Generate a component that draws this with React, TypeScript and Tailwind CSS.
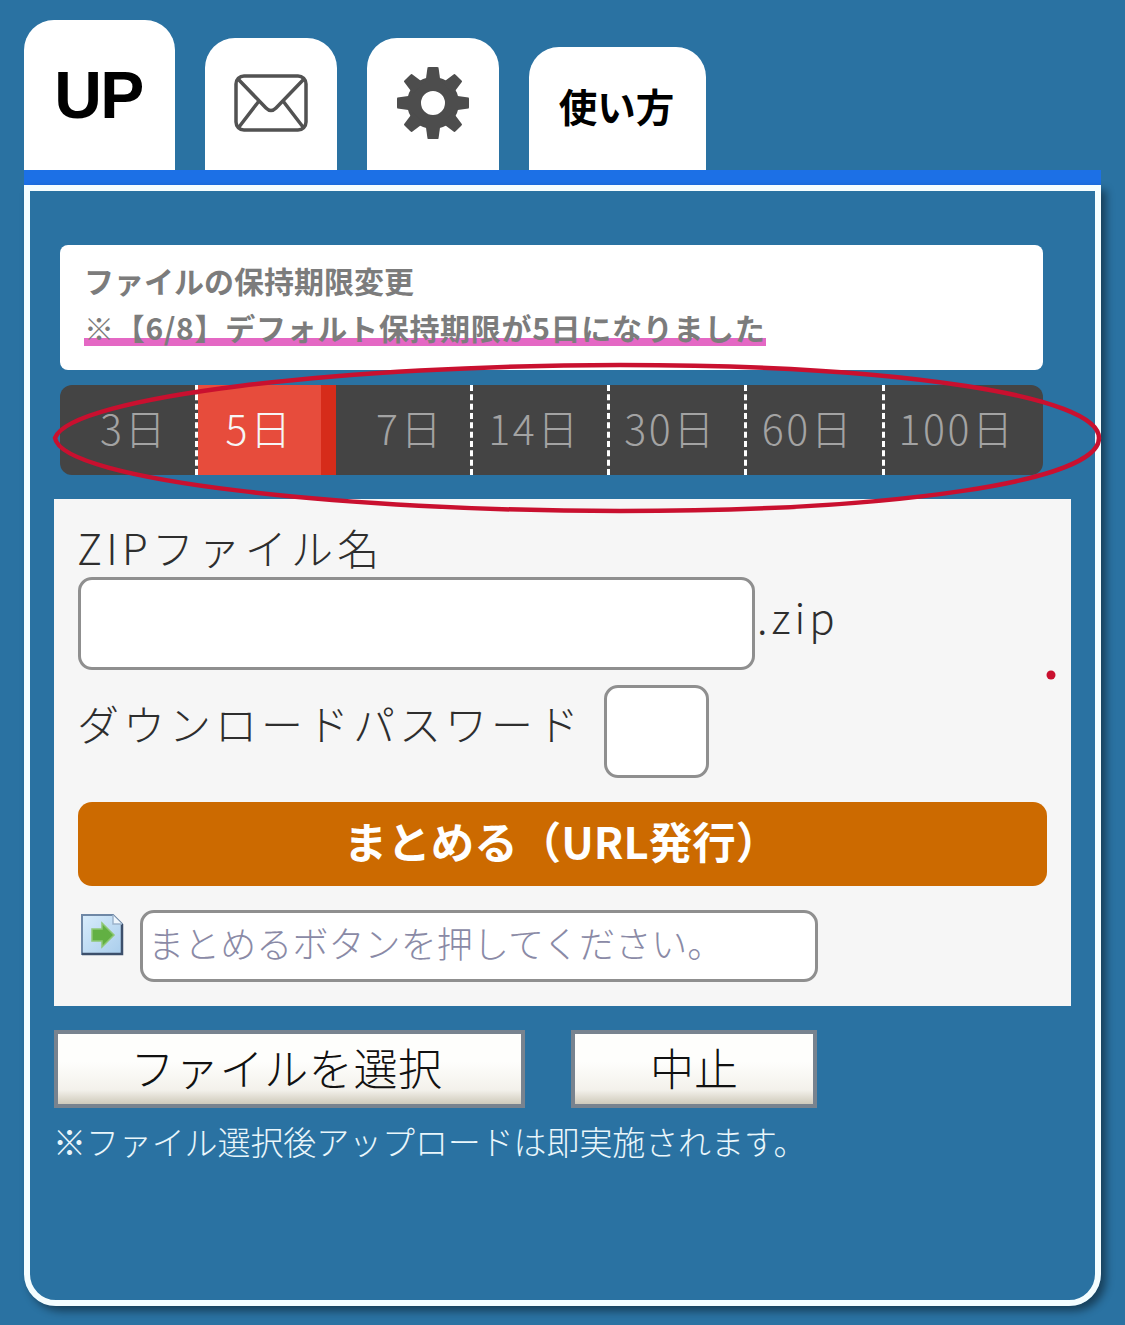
const jp = "font-['Noto_Sans_CJK_JP','Noto_Sans',sans-serif]";

const tabClass = "bg-white rounded-t-[30px] flex items-center justify-center";

const MailIcon = () => (
  <svg width="74" height="58" viewBox="0 0 74 58" fill="none" stroke="#525252" strokeWidth="3.5" strokeLinejoin="round">
    <rect x="2" y="2" width="70" height="54" rx="8" />
    <path d="M4 5 L32 34 Q37 39 42 34 L70 5" />
    <path d="M25 27 L5 53 M49 27 L69 53" />
  </svg>
);

const GearIcon = () => (
  <svg width="74" height="74" viewBox="0 0 74 74" fill="#4d4d4d">
    <path
      fillRule="evenodd"
      d="M37 11a26 26 0 1 0 0 52a26 26 0 1 0 0-52ZM37 25a12 12 0 1 1 0 24a12 12 0 1 1 0-24Z"
    />
    {[0, 45, 90, 135, 180, 225, 270, 315].map((r) => (
      <path
        key={r}
        d="M31.500 1.500Q31.600 1 33 1H41Q42.400 1 42.500 1.500L44.500 16H29.500Z"
        transform={`rotate(${r} 37 37)`}
      />
    ))}
  </svg>
);

const NextIcon = () => (
  <svg width="46" height="46" viewBox="0 0 46 46">
    <defs>
      <linearGradient id="sheet" x1="0" y1="0" x2="1" y2="1">
        <stop offset="0" stopColor="#d8ecfb" />
        <stop offset="1" stopColor="#a9cdec" />
      </linearGradient>
    </defs>
    <path d="M3 3H34L43 12V42H3Z" fill="url(#sheet)" stroke="#6f88a6" strokeWidth="2" />
    <path d="M3 42H43V12" fill="none" stroke="#3c4f6b" strokeWidth="2.500" />
    <path d="M34 3V12H43" fill="#eef6fc" stroke="#9db4cb" strokeWidth="1.500" />
    <path d="M13 17H23V11L35 23L23 35V29H13Z" fill="#62b043" stroke="#8fc876" strokeWidth="1.500" />
  </svg>
);

const days = [
  { label: "3日", w: "w-[138px]", dash: true, text: "pl-[13px]" },
  { label: "5日", w: "w-[138px]", active: true },
  { label: "7日", w: "w-[137px]", dash: true, text: "pl-[14px]" },
  { label: "14日", w: "w-[137px]", dash: true, text: "pr-[11px]" },
  { label: "30日", w: "w-[137px]", dash: true, text: "pr-[13px]" },
  { label: "60日", w: "w-[138px]", dash: true, text: "pr-[13px]" },
  { label: "100日", w: "flex-1", text: "pr-[14px]" },
];

const App = () => {
  return (
    <div className={`relative w-[1125px] h-[1325px] overflow-hidden bg-[#2a72a2] pt-[20px] pl-[24px] ${jp}`}>
      {/* tabs */}
      <div className="flex items-end h-[150px]">
        <div className={`${tabClass} w-[151px] h-[150px] pr-[2px]`}>
          <span className="text-[66px] font-bold text-black leading-none font-['Liberation_Sans',sans-serif] tracking-[-1.5px]">UP</span>
        </div>
        <div className={`${tabClass} w-[132px] h-[132px] ml-[30px] pb-[2px]`}>
          <MailIcon />
        </div>
        <div className={`${tabClass} w-[132px] h-[132px] ml-[30px] pb-[2px]`}>
          <GearIcon />
        </div>
        <div className={`${tabClass} w-[177px] h-[123px] ml-[30px] pr-[2px]`}>
          <span className="text-[38.500px] font-bold text-black leading-none mb-[7px]">使い方</span>
        </div>
      </div>

      {/* main panel */}
      <div className="w-[1077px] h-[1136px] border-t-[15px] border-t-[#1c70e6]">
        <div className="h-[1121px] border-[6px] border-[#f4fdff] rounded-b-[32px] shadow-[5px_5px_8px_rgba(0,0,0,0.45)] px-[24px] pt-[54px]">
          <div className="ml-[6px] w-[983px] h-[125px] bg-white rounded-[8px] px-[24px] pt-[11px] text-[30px] font-bold text-[#7c7c7c] leading-[48px]">
            <p>ファイルの保持期限変更</p>
            <p className="w-fit mt-[5px] pb-[1px] leading-[36px] tracking-[0.7px] bg-[linear-gradient(transparent_78%,#e468c4_78%)]">※【6/8】デフォルト保持期限が5日になりました</p>
          </div>

          <div className="ml-[6px] w-[983px] mt-[15px] h-[90px] bg-[#444444] rounded-[12px] flex overflow-hidden text-[41px] font-light text-[#a3a3a3] tracking-[2.5px]">
            {days.map((d) => (
              <div
                key={d.label}
                className={`${d.w} pb-[4px] flex items-center justify-center ${d.text ?? ""} ${
                  d.active ? "bg-[#e74c3c] border-r-[15px] border-[#d62c1a] text-[#f6f6f6]" : ""
                } ${d.dash ? "border-r-[3px] border-dashed border-white" : ""}`}
              >
                {d.label}
              </div>
            ))}
          </div>

          {/* form */}
          <div className="mt-[24px] h-[507px] bg-[#f6f6f6] px-[24px] pt-[24px] text-[#2e2e2e] text-[42px] font-light">
            <p className="leading-[54px] -mt-[3px] mb-[3px] -ml-[1px] tracking-[4.300px]">ZIPファイル名</p>
            <div className="flex items-center">
              <div className="w-[677px] h-[93px] bg-white border-[3px] border-[#8f8f8f] rounded-[14px]"></div>
              <span className="ml-[2px] tracking-[4px] mb-[16px]">.zip</span>
            </div>
            <div className="flex items-center mt-[15px]">
              <span className="tracking-[4px] -ml-[1px] w-[527px] mb-[18px]">ダウンロードパスワード</span>
              <div className="w-[105px] h-[93px] bg-white border-[3px] border-[#8f8f8f] rounded-[14px]"></div>
            </div>
            <button className="block mt-[24px] pb-[6px] pr-[2px] w-[969px] h-[84px] bg-[#cc6a00] rounded-[14px] text-white text-[43.500px] font-bold">
              まとめる（URL発行）
            </button>
            <div className="flex items-start mt-[24px]">
              <div className="ml-[1px] mt-[2px] w-[61px]">
                <NextIcon />
              </div>
              <div className="w-[678px] h-[72px] bg-white border-[3px] border-[#8f8f8f] rounded-[14px] pl-[5px] text-[36px] leading-[59px] text-[#8a8aa6] tracking-[0.1px]">
                まとめるボタンを押してください。
              </div>
            </div>
          </div>

          {/* file buttons */}
          <div className="flex mt-[24px] text-[44px] text-[#111] font-light">
            <button className="w-[471px] h-[78px] pb-[6px] pr-[6px] tracking-[0.6px] border-[4px] border-[#78838f] bg-gradient-to-b from-[#fefefc] from-[40%] via-[#f3f1eb] via-[80%] to-[#cfcabb]">ファイルを選択</button>
            <button className="w-[246px] h-[78px] pb-[6px] ml-[46px] border-[4px] border-[#78838f] bg-gradient-to-b from-[#fefefc] from-[40%] via-[#f3f1eb] via-[80%] to-[#cfcabb]">中止</button>
          </div>
          <p className="mt-[11px] -ml-[1px] text-[33px] leading-[44px] tracking-[-0.1px] text-[#e9f6fb] font-light whitespace-nowrap">※ファイル選択後アップロードは即実施されます。</p>
        </div>
      </div>

      {/* hand drawn annotation */}
      <svg className="absolute left-0 top-0 pointer-events-none" width="1125" height="1325" fill="none">
        <path
          d="M55 438C70 396 350 365 620 365C900 365 1099 396 1099 438C1099 481 900 511 620 511C350 511 62 481 55 438Z"
          stroke="#c9102f"
          strokeWidth="4.500"
        />
        <circle cx="1051" cy="675" r="4.500" fill="#c9102f" />
      </svg>
    </div>
  );
};

export default App;
